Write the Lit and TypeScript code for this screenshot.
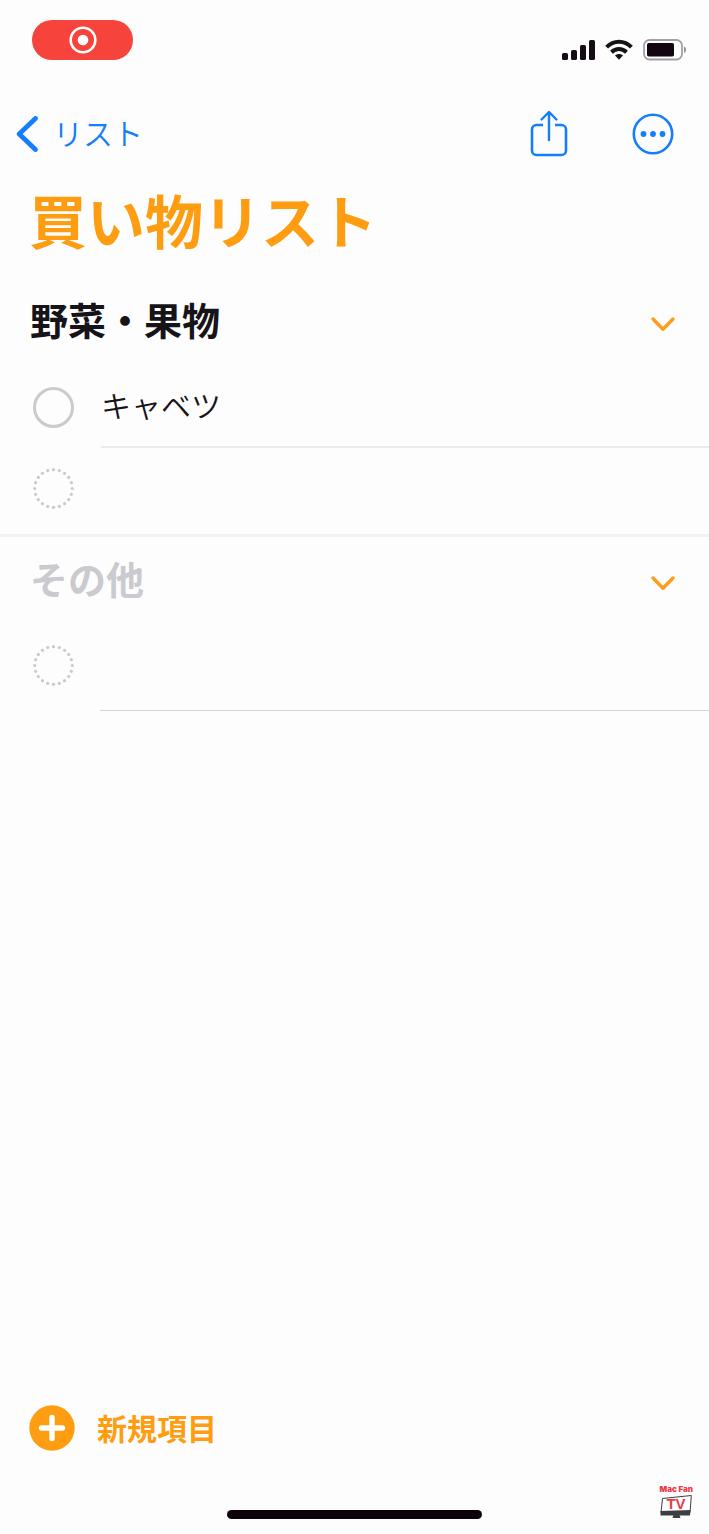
import { LitElement, html, css, svg } from "lit";
import { customElement, property, state } from "lit/decorators.js";

interface Item {
  text: string;
  done: boolean;
}

interface Section {
  name: string;
  muted: boolean;
  items: Item[];
}

const DOTS = Array.from({ length: 20 }, (_, i) => {
  const angle = (i * Math.PI) / 10;
  return { x: 20.5 + 18.8 * Math.cos(angle), y: 20.5 + 18.8 * Math.sin(angle) };
});

@customElement("status-bar")
export class StatusBar extends LitElement {
  static styles = css`
    :host {
      display: flex;
      justify-content: space-between;
      align-items: flex-start;
      padding: 20px 22px 0 32px;
      height: 80px;
    }
    .recording {
      display: grid;
      place-items: center;
      width: 101px;
      height: 40px;
      padding: 0;
      border: 0;
      border-radius: 20px;
      background: #f6433b;
    }
    .indicators {
      display: flex;
      align-items: center;
      gap: 10px;
      padding-top: 19px;
    }
    svg {
      display: block;
    }
  `;

  render() {
    return html`
      <button class="recording" aria-label="画面収録を停止">
        <svg width="28" height="28" viewBox="0 0 28 28">
          <circle cx="14" cy="14" r="12.3" fill="none" stroke="#fff" stroke-width="2.6" />
          <circle cx="14" cy="14" r="5.3" fill="#fff" />
        </svg>
      </button>
      <div class="indicators">
        <svg width="33" height="22" viewBox="0 0 33 22" fill="#150c15">
          <rect x="0" y="14" width="6" height="7" rx="1.6" />
          <rect x="9" y="11" width="6" height="10" rx="1.6" />
          <rect x="18" y="6" width="6" height="15" rx="1.6" />
          <rect x="27" y="1" width="6" height="20" rx="1.6" />
        </svg>
        <svg width="28" height="22" viewBox="0 0 28 22" fill="none" stroke="#151315" stroke-width="4">
          <path d="M1.6 8.2C8.5 1 19.5 1 26.4 8.2" />
          <path d="M6.5 13.2c4.3-4.2 10.7-4.2 15 0" />
          <path d="M14 20.8l-4-4.3c2.3-2 5.7-2 8 0z" fill="#151315" stroke="none" />
        </svg>
        <svg width="44" height="22" viewBox="0 0 44 22">
          <rect x="1" y="1" width="38" height="19.5" rx="5.5" fill="none" stroke="#a3a0a4" stroke-width="1.8" />
          <rect x="4" y="4" width="27" height="13.5" rx="1.8" fill="#120610" />
          <path d="M41 7.5c2.7 1 2.7 5.5 0 6.5z" fill="#949195" />
        </svg>
      </div>
    `;
  }
}

@customElement("nav-bar")
export class NavBar extends LitElement {
  static styles = css`
    :host {
      display: flex;
      justify-content: space-between;
      align-items: center;
      height: 108px;
      padding: 0 35px 0 16px;
      color: #147efb;
    }
    .back {
      display: flex;
      align-items: center;
      gap: 15px;
      color: inherit;
      text-decoration: none;
      font-size: 30px;
      line-height: 40px;
      font-weight: 350;
    }
    .label {
      padding-bottom: 4px;
    }
    .actions {
      display: flex;
      align-items: center;
      gap: 64px;
    }
    .icon {
      padding: 0;
      border: 0;
      background: none;
      color: inherit;
    }
    svg {
      display: block;
      fill: none;
      stroke: currentColor;
      stroke-linecap: round;
      stroke-linejoin: round;
    }
    .dot {
      fill: currentColor;
      stroke: none;
    }
  `;

  render() {
    return html`
      <a class="back" href="#lists">
        <svg width="22" height="36" viewBox="0 0 22 36" stroke-width="4.8">
          <path d="M19.4 2.5L3.2 18l16.2 15.5" />
        </svg>
        <span class="label">リスト</span>
      </a>
      <div class="actions">
        <button class="icon" aria-label="共有">
          <svg width="38" height="48" viewBox="0 0 38 48" stroke-width="2.6">
            <path d="M13 15H6.5a4.500 4.500 0 0 0-4.500 4.500v21a4.500 4.500 0 0 0 4.500 4.500h25a4.500 4.500 0 0 0 4.500-4.500v-21a4.500 4.500 0 0 0-4.500-4.500H25" stroke-linecap="butt" />
            <path d="M19 30V2.5M11.500 9.500L19 2l7.500 7.500" stroke-width="2.4" />
          </svg>
        </button>
        <button class="icon" aria-label="その他の操作">
          <svg width="42" height="42" viewBox="0 0 42 42" stroke-width="2.6">
            <circle cx="21" cy="21" r="19.2" />
            <circle class="dot" cx="11.5" cy="21" r="2.9" />
            <circle class="dot" cx="21" cy="21" r="2.9" />
            <circle class="dot" cx="30.5" cy="21" r="2.9" />
          </svg>
        </button>
      </div>
    `;
  }
}

@customElement("list-section")
export class ListSection extends LitElement {
  static styles = css`
    :host {
      display: block;
    }
    .head {
      display: flex;
      justify-content: space-between;
      align-items: center;
      box-sizing: border-box;
      height: 88px;
      padding: 4px 33px 0 30px;
    }
    .name {
      margin: 0;
      padding-bottom: 10px;
      font-size: 38px;
      line-height: 56px;
      font-weight: 700;
      color: #161418;
    }
    .muted {
      color: #cbcacf;
    }
    .toggle {
      padding: 0;
      border: 0;
      background: none;
      color: #fc9e1b;
    }
    .closed {
      transform: rotate(-90deg);
    }
    svg {
      display: block;
    }
    .row {
      display: flex;
      align-items: center;
      gap: 27px;
      padding-left: 33px;
    }
    .check {
      appearance: none;
      flex: none;
      box-sizing: border-box;
      width: 41px;
      height: 41px;
      margin: 0;
      border: 3px solid #cbcacd;
      border-radius: 50%;
    }
    .check:checked {
      background: #fe9d12;
      border-color: #fe9d12;
    }
    .text {
      flex: 1;
      box-sizing: border-box;
      height: 82px;
      border-bottom: 2px solid #ebeaee;
      font-size: 30px;
      line-height: 76px;
      font-weight: 350;
      color: #161418;
    }
    .ghost {
      flex: none;
      fill: #cbc9ce;
    }
    .entry {
      flex: 1;
      min-width: 0;
      box-sizing: border-box;
      height: 80px;
      padding: 0;
      border: 0;
      outline: 0;
      background: none;
      font: inherit;
      font-size: 30px;
      color: #161418;
    }
  `;

  @property({ attribute: false }) section!: Section;
  @state() private open = true;

  private row(item: Item, index: number) {
    return html`
      <div class="row">
        <input class="check" type="checkbox" id="item-${index}" .checked=${item.done} />
        <label class="text" for="item-${index}">${item.text}</label>
      </div>
    `;
  }

  render() {
    const { name, muted, items } = this.section;
    return html`
      <div class="head">
        <h2 class="name ${muted ? "muted" : ""}">${name}</h2>
        <button
          class="toggle ${this.open ? "" : "closed"}"
          aria-label=${name}
          aria-expanded=${this.open}
          @click=${() => (this.open = !this.open)}
        >
          <svg width="26" height="16" viewBox="0 0 26 16" fill="none" stroke="currentColor" stroke-width="3.4" stroke-linecap="round" stroke-linejoin="round">
            <path d="M3 3l10 10.200L23 3" />
          </svg>
        </button>
      </div>
      ${this.open
        ? html`
            ${items.map((item, index) => this.row(item, index))}
            <label class="row">
              <svg class="ghost" width="41" height="41" viewBox="0 0 41 41">
                ${DOTS.map((d) => svg`<circle cx=${d.x} cy=${d.y} r="1.6" />`)}
              </svg>
              <input class="entry" type="text" aria-label="${name}に追加" />
            </label>
          `
        : null}
    `;
  }
}

@customElement("channel-mark")
export class ChannelMark extends LitElement {
  static styles = css`
    :host {
      display: grid;
      justify-items: center;
      font-family: Inter, "Liberation Sans", sans-serif;
      font-weight: 900;
      color: #ec3a48;
    }
    .name {
      font-size: 8px;
      line-height: 9px;
      white-space: nowrap;
    }
    .screen {
      display: block;
    }
    .tv {
      font-family: "Liberation Sans", sans-serif;
      font-size: 15px;
      font-weight: 700;
    }
  `;

  render() {
    return html`
      <span class="name">Mac Fan</span>
      <svg class="screen" width="32" height="25" viewBox="0 0 32 25">
        <path d="M2.5 4.500L31.300 1.500l-1.300 17H1z" fill="#fff" stroke="#3e3d42" />
        <path d="M.5 17l30-1-.5 5.500H.5z" fill="#3e3d42" />
        <path d="M13.5 21h6l1 3h-8z" fill="#3e3d42" />
        <text class="tv" x="16" y="15" text-anchor="middle" fill="#ec3a48">TV</text>
      </svg>
    `;
  }
}

@customElement("app-root")
export class AppRoot extends LitElement {
  static styles = css`
    :host {
      position: relative;
      display: flex;
      flex-direction: column;
      box-sizing: border-box;
      min-height: 100vh;
      background: #fdfdfd;
      font-family: "Noto Sans CJK JP", sans-serif;
    }
    status-bar,
    nav-bar {
      box-sizing: border-box;
    }
    .title {
      margin: 0;
      padding: 0 29px 28px;
      font-size: 58px;
      line-height: 62px;
      font-weight: 700;
      color: #fe9d12;
    }
    .group {
      padding-bottom: 6px;
      border-bottom: 3px solid #f1f0f2;
    }
    .last {
      padding-bottom: 5px;
    }
    .rule {
      height: 1px;
      margin: 0 0 0 100px;
      border: 0;
      background: #d5d4d8;
    }
    .footer {
      display: flex;
      margin-top: auto;
      padding: 24px 29px 58px;
    }
    .add {
      display: flex;
      align-items: center;
      gap: 22px;
      padding: 0;
      border: 0;
      background: none;
      font-family: inherit;
      font-size: 30px;
      line-height: 46px;
      font-weight: 700;
      color: #fe9d12;
    }
    .caption {
      padding-bottom: 2px;
    }
    .home {
      align-self: center;
      width: 36%;
      height: 9px;
      margin-bottom: 15px;
      border-radius: 5px;
      background: #0c0209;
    }
    .mark {
      position: absolute;
      right: 16px;
      bottom: 15px;
    }
  `;

  @state() private sections: Section[] = [
    { name: "野菜・果物", muted: false, items: [{ text: "キャベツ", done: false }] },
    { name: "その他", muted: true, items: [] },
  ];

  render() {
    const last = this.sections.length - 1;
    return html`
      <status-bar></status-bar>
      <nav-bar></nav-bar>
      <h1 class="title">買い物リスト</h1>
      ${this.sections.map(
        (section, i) => html`<list-section class=${i === last ? "last" : "group"} .section=${section}></list-section>`
      )}
      <hr class="rule" />
      <div class="footer">
        <button class="add">
          <svg width="46" height="46" viewBox="0 0 46 46">
            <circle cx="23" cy="23" r="22.7" fill="#fe9d12" />
            <path d="M23 12.5v21M12.5 23h21" stroke="#fff" stroke-width="5.4" stroke-linecap="round" />
          </svg>
          <span class="caption">新規項目</span>
        </button>
      </div>
      <div class="home"></div>
      <channel-mark class="mark"></channel-mark>
    `;
  }
}
